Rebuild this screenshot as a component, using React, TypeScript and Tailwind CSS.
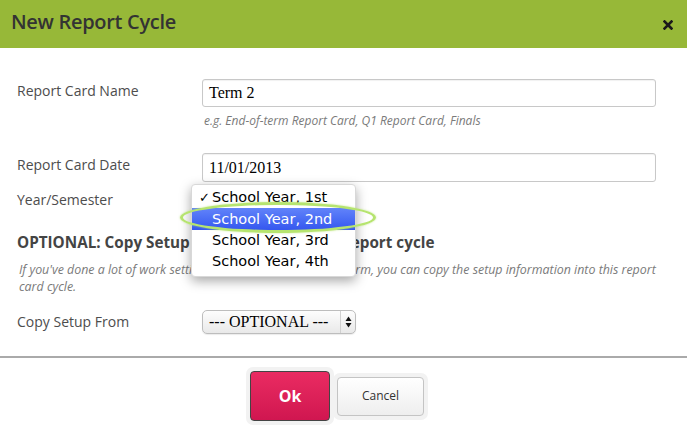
import React from "react";

const sans = { fontFamily: '"Open Sans", "Noto Sans", sans-serif' };

export default function App() {
  return (
    <div
      className="relative w-[687px] h-[435px] bg-white overflow-hidden text-[#4d4d4d]"
      style={sans}
    >
      {/* Header */}
      <div className="h-[48px] bg-[#97b838] flex items-center justify-between pl-[11px] pr-[14px]">
        <div className="text-[20px] font-semibold text-[#333] tracking-[-0.3px] leading-none -mt-[4px]">
          New Report Cycle
        </div>
        <svg width="10" height="10" viewBox="0 0 10 10" className="mt-[2px]">
          <path d="M1.5 1.5 L8.5 8.5 M8.5 1.5 L1.5 8.5" stroke="#1a1a1a" strokeWidth="2.6" strokeLinecap="square" />
        </svg>
      </div>

      {/* Body */}
      <div className="pt-[31px] pl-[17px] pr-[31px]">
        <div className="flex items-start">
          <div className="w-[185px] pt-[2px] text-[14px] leading-[20px]">Report Card Name</div>
          <div className="flex-1">
            <div
              className="h-[28px] border border-[#c8c8c8] rounded-[3px] flex items-center pl-[6px] text-[16px] text-black shadow-[inset_0_1px_1px_rgba(0,0,0,0.06)]"
              style={{ fontFamily: '"Liberation Serif", serif' }}
            >
              Term 2
            </div>
            <div className="mt-[7px] pl-[2px] text-[12px] italic text-[#7a7a7a] leading-[14px]">
              e.g. End-of-term Report Card, Q1 Report Card, Finals
            </div>
          </div>
        </div>

        <div className="flex items-start mt-[25px]">
          <div className="w-[185px] pt-[2px] text-[14px] leading-[20px]">Report Card Date</div>
          <div className="flex-1">
            <div
              className="h-[29px] border border-[#c8c8c8] rounded-[3px] flex items-center pl-[6px] text-[16px] text-black shadow-[inset_0_1px_1px_rgba(0,0,0,0.06)]"
              style={{ fontFamily: '"Liberation Serif", serif' }}
            >
              11/01/2013
            </div>
          </div>
        </div>

        <div className="mt-[8px] text-[14px] leading-[20px]">Year/Semester</div>

        <div className="mt-[22px] text-[15.25px] font-bold text-[#444] leading-[20px]">
          OPTIONAL: Copy Setup from your previous report cycle
        </div>

        <div className="mt-[9px] pl-[2px] text-[12.4px] italic text-[#7a7a7a] leading-[17px] whitespace-nowrap">
          If you've done a lot of work setting up a cycle for a previous term, you can copy the setup information into this report
          <br />
          card cycle.
        </div>

        <div className="flex items-center mt-[15px]">
          <div className="w-[185px] text-[14px] leading-[20px]">Copy Setup From</div>
          <div className="w-[154px] h-[24px] border border-[#bdbdbd] rounded-[5px] bg-gradient-to-b from-[#fdfdfd] to-[#e9e9e9] flex items-center shadow-[0_1px_1px_rgba(0,0,0,0.08)]">
            <div
              className="flex-1 pl-[6px] text-[16px] text-black leading-none"
              style={{ fontFamily: '"Liberation Serif", serif' }}
            >
              --- OPTIONAL ---
            </div>
            <div className="w-[15px] h-full border-l border-[#d0d0d0] flex items-center justify-center">
              <svg width="7" height="12" viewBox="0 0 7 12">
                <path d="M3.5 0.5 L6.5 5 L0.5 5 Z" fill="#111" />
                <path d="M3.5 11.5 L6.5 7 L0.5 7 Z" fill="#111" />
              </svg>
            </div>
          </div>
        </div>
      </div>

      <div className="mt-[22px] h-[2px] bg-[#aaaaaa]" />

      {/* Buttons */}
      <div className="flex items-center pl-[246px] mt-[9px]">
        <div className="p-[4px] rounded-[7px] bg-[#f2f2f2]">
          <div className="w-[80px] h-[50px] rounded-[4px] border border-[#444] bg-gradient-to-b from-[#ea2b62] to-[#d01650] flex items-center justify-center text-white text-[16px] font-bold">
            Ok
          </div>
        </div>
        <div className="p-[4px] rounded-[7px] bg-[#f2f2f2] -ml-[1px]">
          <div className="w-[87px] h-[39px] rounded-[4px] border border-[#c4c4c4] bg-gradient-to-b from-[#ffffff] to-[#eeeeee] flex items-center justify-center text-[#333] text-[12px]">
            Cancel
          </div>
        </div>
      </div>

      {/* Popup menu overlay */}
      <div
        className="absolute left-[191px] top-[184px] w-[165px] h-[93px] bg-white rounded-[4px] shadow-[0_4px_12px_rgba(0,0,0,0.35)] border border-[#d8d8d8] pt-[2px]"
        style={{ fontFamily: '"DejaVu Sans", "Liberation Sans", sans-serif' }}
      >
        <div className="h-[21px] flex items-center text-[14.5px] text-black leading-none">
          <span className="w-[20px] pl-[7px] text-[13px]">✓</span>
          <span>School Year, 1st</span>
        </div>
        <div className="h-[22px] flex items-center text-[14.5px] text-white leading-none bg-gradient-to-b from-[#6283fa] to-[#3556ef]">
          <span className="w-[20px]" />
          <span>School Year, 2nd</span>
        </div>
        <div className="h-[21px] flex items-center text-[14.5px] text-black leading-none">
          <span className="w-[20px]" />
          <span>School Year, 3rd</span>
        </div>
        <div className="h-[21px] flex items-center text-[14.5px] text-black leading-none">
          <span className="w-[20px]" />
          <span>School Year, 4th</span>
        </div>
      </div>

      {/* green ellipse annotation */}
      <div className="absolute left-[180px] top-[202px] w-[196px] h-[31px] rounded-[50%] border-[3px] border-[#b6e46f] shadow-[0_0_2px_rgba(182,228,111,0.8)]" />
    </div>
  );
}
